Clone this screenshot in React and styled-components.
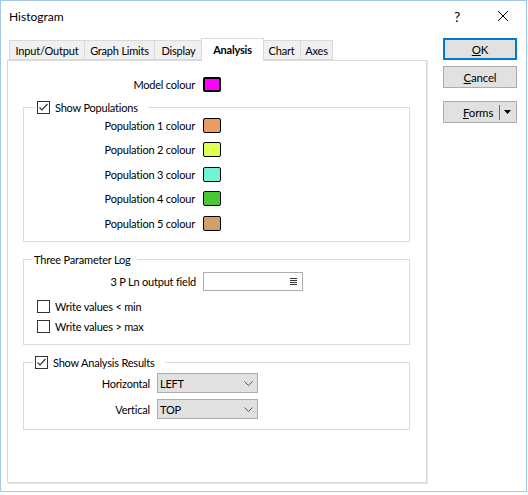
import React from 'react';
import styled, { createGlobalStyle } from 'styled-components';

// Global //
// --------//
const GlobalStyle = createGlobalStyle`
  html, body {
    margin: 0;
    padding: 0;
    background: #ffffff;
  }
  body {
    font-family: Lato, "Liberation Sans", Arial, sans-serif;
    font-size: 11px;
    letter-spacing: -0.2px;
    color: #000000;
  }
  * {
    box-sizing: border-box;
  }
`;

// Window frame //
// --------------//
const Window = styled.div`
  width: 527px;
  height: 492px;
  border: 1px solid #a4c8ec;
  background: #ffffff;
  display: flex;
  flex-direction: column;
`;

const TitleBar = styled.div`
  height: 30px;
  display: flex;
  align-items: center;
  padding-left: 8px;
`;

const Title = styled.div`
  font-size: 12px;
  letter-spacing: 0;
  flex: 1;
`;

const CaptionButton = styled.div`
  width: 46px;
  height: 30px;
  display: flex;
  align-items: center;
  justify-content: center;
  font-size: 14px;
`;

const Main = styled.div`
  display: flex;
  padding: 7px 0 0 6px;
`;

// Tabs //
// ------//
const TabControl = styled.div`
  display: flex;
  flex-direction: column;
  width: 420px;
`;

const TabStrip = styled.div`
  display: flex;
  align-items: flex-end;
  height: 22px;
  padding-left: 2px;
`;

const Tab = styled.div`
  position: relative;
  width: ${(p) => p.$width}px;
  height: ${(p) => (p.$active ? 23 : 20)}px;
  margin-left: ${(p) => p.$ml}px;
  margin-bottom: ${(p) => (p.$active ? -1 : 0)}px;
  z-index: ${(p) => (p.$active ? 2 : 1)};
  border: 1px solid #d9d9d9;
  border-bottom: ${(p) => (p.$active ? 'none' : '1px solid #d9d9d9')};
  background: ${(p) => (p.$active ? '#ffffff' : '#f0f0f0')};
  font-weight: ${(p) => (p.$active ? 700 : 400)};
  display: flex;
  align-items: center;
  justify-content: center;
  padding-bottom: ${(p) => (p.$active ? 2 : 0)}px;
`;

const Panel = styled.div`
  height: 423px;
  border: 1px solid #d9d9d9;
  box-shadow: 1px 1px 0 #e6e6e6;
  padding: 15px 16px 0 15px;
  display: flex;
  flex-direction: column;
`;

// Rows and fields //
// -----------------//
const Field = styled.div`
  display: grid;
  grid-template-columns: ${(p) => p.$labelWidth}px auto;
  column-gap: ${(p) => p.$gap}px;
  align-items: center;
  height: ${(p) => p.$height || 16}px;
`;

const Label = styled.div`
  text-align: right;
  white-space: nowrap;
`;

const Swatch = styled.div`
  width: 18px;
  height: 15px;
  border: ${(p) => (p.$thick ? 2 : 1)}px solid #000000;
  border-radius: 2px;
  background: ${(p) => p.$color};
`;

const Group = styled.fieldset`
  margin: ${(p) => p.$mt}px 0 0 0;
  padding: 0 0 ${(p) => p.$pb}px 0;
  border: 1px solid #dcdcdc;
  min-width: 0;
`;

const Legend = styled.legend`
  margin-left: ${(p) => p.$ml}px;
  padding: 0 ${(p) => p.$pr}px 0 2px;
  height: 16px;
  display: flex;
  align-items: center;
  gap: 5px;
  white-space: nowrap;
`;

const Rows = styled.div`
  display: flex;
  flex-direction: column;
  gap: ${(p) => p.$gap}px;
  padding: ${(p) => p.$pt}px 0 0 ${(p) => p.$pl || 0}px;
`;

const CheckRow = styled.div`
  display: flex;
  align-items: center;
  gap: 5px;
  height: 16px;
`;

const Box = styled.div`
  width: 13px;
  height: 13px;
  border: 1px solid #333333;
  background: #ffffff;
  display: flex;
  align-items: center;
  justify-content: center;
`;

const TextInput = styled.div`
  width: 100px;
  height: 19px;
  border: 1px solid #adadad;
  background: #ffffff;
  display: flex;
  align-items: center;
  justify-content: flex-end;
  padding-right: 5px;
`;

const Select = styled.div`
  width: 101px;
  height: 20px;
  border: 1px solid #adadad;
  background: #e1e1e1;
  display: flex;
  align-items: center;
  justify-content: space-between;
  padding: 0 4px 0 2px;
`;

// Buttons //
// ---------//
const ButtonColumn = styled.div`
  display: flex;
  flex-direction: column;
  margin-left: 16px;
`;

const Button = styled.div`
  width: 74px;
  height: 22px;
  margin-top: ${(p) => p.$mt || 0}px;
  background: #e1e1e1;
  border: ${(p) => (p.$default ? '2px solid #0078d7' : '1px solid #adadad')};
  display: flex;
  align-items: center;
  justify-content: center;
  font-size: 11.5px;
`;

const SplitButton = styled(Button)`
  justify-content: flex-start;
  padding-left: 19px;
`;

const SplitDivider = styled.div`
  width: 1px;
  height: 15px;
  background: #6b6b6b;
  margin-left: 6px;
  margin-right: 4px;
`;

// Icons //
// -------//
const Check = ({ checked }) => (
  <Box>
    {checked && (
      <svg width="11" height="11" viewBox="0 0 11 11">
        <polyline points="1.5,5.5 4,8 9.5,2" fill="none" stroke="#333" strokeWidth="1.2" />
      </svg>
    )}
  </Box>
);

const Chevron = () => (
  <svg width="9" height="5" viewBox="0 0 9 5">
    <polyline points="0.5,0.5 4.5,4.5 8.5,0.5" fill="none" stroke="#555" strokeWidth="1" />
  </svg>
);

const ListIcon = () => (
  <svg width="7" height="7" viewBox="0 0 7 7">
    <path d="M0 0.5H7M0 2.5H7M0 4.5H7M0 6.5H7" stroke="#333" strokeWidth="1" />
  </svg>
);

const CloseIcon = () => (
  <svg width="10" height="10" viewBox="0 0 10 10">
    <path d="M0 0L10 10M10 0L0 10" stroke="#000" strokeWidth="1" />
  </svg>
);

const DownArrow = () => (
  <svg width="7" height="4" viewBox="0 0 7 4">
    <polygon points="0,0 7,0 3.5,4" fill="#000" />
  </svg>
);

// Data //
// ------//
const tabs = [
  { label: 'Input/Output', width: 76, ml: 0 },
  { label: 'Graph Limits', width: 71, ml: -1 },
  { label: 'Display', width: 49, ml: -1 },
  { label: 'Analysis', width: 63, ml: -2, active: true },
  { label: 'Chart', width: 39, ml: -2 },
  { label: 'Axes', width: 33, ml: -1 },
];

const populations = ['#eb9b63', '#dcff50', '#70f5d8', '#48c832', '#d29e68'];

// Component //
// -----------//
function App() {
  return (
    <>
      <GlobalStyle />
      <Window>
        <TitleBar>
          <Title>Histogram</Title>
          <CaptionButton>?</CaptionButton>
          <CaptionButton>
            <CloseIcon />
          </CaptionButton>
        </TitleBar>

        <Main>
          <TabControl>
            <TabStrip>
              {tabs.map((t) => (
                <Tab key={t.label} $width={t.width} $ml={t.ml} $active={t.active}>
                  {t.label}
                </Tab>
              ))}
            </TabStrip>

            <Panel>
              <Field $labelWidth={172} $gap={8}>
                <Label>Model colour</Label>
                <Swatch $color="#ff00ff" $thick />
              </Field>

              <Group $mt={7} $pb={10}>
                <Legend $ml={11} $pr={10}>
                  <Check checked />
                  Show Populations
                </Legend>
                <Rows $gap={8.4} $pt={2.5}>
                  {populations.map((c, i) => (
                    <Field key={c + i} $labelWidth={171} $gap={8}>
                      <Label>Population {i + 1} colour</Label>
                      <Swatch $color={c} />
                    </Field>
                  ))}
                </Rows>
              </Group>

              <Group $mt={9} $pb={9.7}>
                <Legend $ml={8} $pr={6}>
                  Three Parameter Log
                </Legend>
                <Rows $gap={0} $pt={4.5}>
                  <Field $labelWidth={172} $gap={7} $height={19}>
                    <Label>3 P Ln output field</Label>
                    <TextInput>
                      <ListIcon />
                    </TextInput>
                  </Field>
                </Rows>
                <Rows $gap={4} $pt={8} $pl={13}>
                  <CheckRow>
                    <Check />
                    Write values &lt; min
                  </CheckRow>
                  <CheckRow>
                    <Check />
                    Write values &gt; max
                  </CheckRow>
                </Rows>
              </Group>

              <Group $mt={9} $pb={9.7}>
                <Legend $ml={9} $pr={10}>
                  <Check checked />
                  Show Analysis Results
                </Legend>
                <Rows $gap={6} $pt={3}>
                  <Field $labelWidth={126} $gap={7} $height={20}>
                    <Label>Horizontal</Label>
                    <Select>
                      LEFT
                      <Chevron />
                    </Select>
                  </Field>
                  <Field $labelWidth={126} $gap={7} $height={20}>
                    <Label>Vertical</Label>
                    <Select>
                      TOP
                      <Chevron />
                    </Select>
                  </Field>
                </Rows>
              </Group>
            </Panel>
          </TabControl>

          <ButtonColumn>
            <Button $default>
              <span><u>O</u>K</span>
            </Button>
            <Button $mt={6}>
              <span><u>C</u>ancel</span>
            </Button>
            <SplitButton $mt={13}>
              <span><u>F</u>orms</span>
              <SplitDivider />
              <DownArrow />
            </SplitButton>
          </ButtonColumn>
        </Main>
      </Window>
    </>
  );
}

export default App;
